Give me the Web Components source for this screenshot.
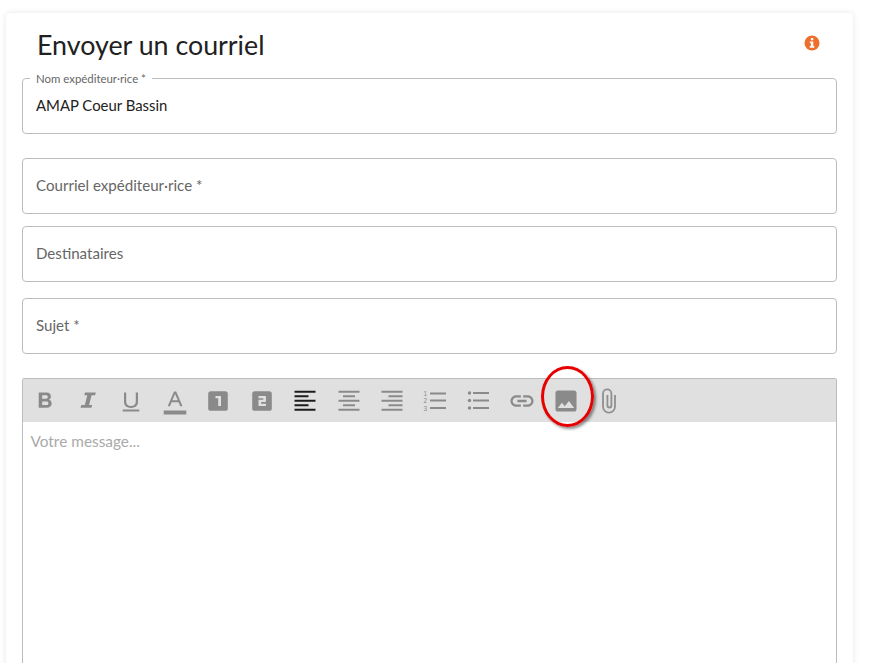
<!DOCTYPE html>
<html lang="fr">
<head>
<meta charset="UTF-8">
<title>Envoyer un courriel</title>
<style>
  html, body { margin: 0; height: 663px; overflow: hidden; background: #fff; }
  body { font-family: "Lato", "Noto Sans", sans-serif; color: #212121; padding: 13px 23px 0 6px; box-sizing: border-box; }
</style>
</head>
<body>
<mail-card>
  <mail-field label="Nom expéditeur·rice *" value="AMAP Coeur Bassin" gap="24"></mail-field>
  <mail-field label="Courriel expéditeur·rice *" gap="12"></mail-field>
  <mail-field label="Destinataires" gap="16"></mail-field>
  <mail-field label="Sujet *" gap="24"></mail-field>
  <mail-editor placeholder="Votre message..."></mail-editor>
</mail-card>

<template id="card-tpl">
  <style>
    :host { display: block; background: #fff; border-radius: 4px; height: 700px; padding: 0 16px; box-shadow: 0 0 6px rgba(0,0,0,.1); }
    header { display: flex; justify-content: space-between; height: 65px; padding: 0 16px; }
    h1 { margin: 14px 0 0 -1px; font-size: 26.8px; line-height: 36px; font-weight: 400; color: #212121; }
    svg { margin: 22px 0 0 0; }
  </style>
  <header>
    <h1>Envoyer un courriel</h1>
    <svg width="16" height="16" viewBox="0 0 16 16" style="margin-right:1px">
      <circle cx="8" cy="8" r="7.5" fill="#ee6e2b"/>
      <rect x="6.9" y="3" width="2.4" height="2.2" rx=".5" fill="#fff"/>
      <path d="M5.8 6.4h3.5v4.7h1v1.6H5.8v-1.6h1V8H5.8z" fill="#fff"/>
    </svg>
  </header>
  <slot></slot>
</template>

<template id="field-tpl">
  <style>
    :host { display: block; position: relative; box-sizing: border-box; height: 56px; border: 1px solid #bdbdbd; border-radius: 4px; }
    .row { display: flex; align-items: center; box-sizing: border-box; height: 100%; padding: 0 13px 2px; font-size: 15.1px; color: #666; }
    .row.value { color: #212121; font-size: 14.9px; }
    label { position: absolute; left: 7px; top: -8px; padding: 0 6px; background: #fff; font-size: 11.4px; line-height: 15px; color: #666; }
  </style>
  <div class="row"></div>
</template>

<template id="editor-tpl">
  <style>
    :host { display: block; position: relative; box-sizing: border-box; height: 400px; border: 1px solid #bdbdbd; border-radius: 2px; }
    nav { display: flex; height: 43px; background: #e0e0e0; padding-left: 0; }
    .msg { padding: 9px 7.5px; font-size: 15.4px; line-height: 20px; color: #aaa; }
    .ring { position: absolute; left: 518px; top: -13px; width: 53px; height: 61px; box-sizing: border-box; border: 3.5px solid #e60000; border-radius: 50%; box-shadow: 2px 2px 3px rgba(0,0,0,.45); }
  </style>
  <nav>
    <tool-btn style="margin-right:-.7px"><svg viewBox="0 0 24 24"><path fill-rule="evenodd" d="M5.700 3.500h7.600c3 0 4.600 1.600 4.600 4 0 1.500-.7 2.500-1.800 3.200 1.700.6 2.600 1.900 2.600 3.600 0 2.800-1.900 4.500-4.900 4.500H5.700zM9.200 6.300v3.400h3.800c1.100 0 1.800-.6 1.800-1.700s-.7-1.700-1.800-1.700zM9.200 12.400v3.700h4.300c1.200 0 1.900-.7 1.900-1.900s-.7-1.800-1.900-1.800z"/></svg></tool-btn>
    <tool-btn><svg viewBox="0 0 24 24"><path d="M9 3.500h10.800l-.7 2.800h-3.500l-2.500 9.700h3.100l-.8 2.800H4.500l.8-2.800h3.500l2.500-9.700H8.300z"/></svg></tool-btn>
    <tool-btn><svg viewBox="0 0 24 24"><path d="M5 3.500h2.200v9c0 3 1.800 4.400 4.800 4.400s4.800-1.400 4.800-4.400v-9H19v9.200c0 4.100-2.900 6.200-7 6.200s-7-2.100-7-6.200zM3.700 20.500h16.600v2H3.700z"/></svg></tool-btn>
    <tool-btn><svg viewBox="0 0 24 24" style="overflow:visible"><path fill-rule="evenodd" d="M11 2.500h2.200l6.300 14.700h-2.300l-1.600-4H8.600l-1.600 4H4.700zM9.400 11.200h5.400L12 4.900zM.7 21.500h22.600v4H.7z"/></svg></tool-btn>
    <tool-btn><svg viewBox="0 0 24 24"><path fill-rule="evenodd" d="M4.800 2.200h14.400a2.600 2.600 0 0 1 2.600 2.600v14.400a2.600 2.600 0 0 1-2.600 2.600H4.800a2.600 2.600 0 0 1-2.600-2.600V4.800a2.600 2.600 0 0 1 2.600-2.600zM9.500 7v2.300h2.700v7.700h2.800V7z"/></svg></tool-btn>
    <tool-btn><svg viewBox="0 0 24 24"><path fill-rule="evenodd" d="M4.800 2.200h14.400a2.600 2.600 0 0 1 2.600 2.600v14.400a2.600 2.600 0 0 1-2.600 2.600H4.800a2.600 2.600 0 0 1-2.600-2.600V4.800a2.600 2.600 0 0 1 2.600-2.600zM8.500 7v2.300h4.800v1.500H8.500V17h7.400v-2.300h-4.800v-1.600h4.800V7z"/></svg></tool-btn>
    <tool-btn><svg viewBox="0 0 24 24" style="fill:#1c1c1c"><path d="M1.500 1.800h21v2h-21zM1.500 6.300h14v2h-14zM1.500 10.800h21v2h-21zM1.500 15.300h14v2h-14zM1.500 19.800h21v2h-21z"/></svg></tool-btn>
    <tool-btn><svg viewBox="0 0 24 24"><path d="M1.500 1.800h21v2h-21zM6 6.300h12v2H6zM1.500 10.800h21v2h-21zM6 15.300h12v2H6zM1.500 19.800h21v2h-21z"/></svg></tool-btn>
    <tool-btn><svg viewBox="0 0 24 24"><path d="M1.500 1.800h21v2h-21zM8.500 6.300h14v2h-14zM1.500 10.800h21v2h-21zM8.500 15.300h14v2h-14zM1.500 19.800h21v2h-21z"/></svg></tool-btn>
    <tool-btn><svg viewBox="0 0 24 24" style="overflow:visible"><path d="M6 3.500h16v2H6zM6 10.500h16v2H6zM6 18h16v2H6z"/><text x="-.5" y="6.500" font-size="6.500" font-family="Liberation Sans">1</text><text x="-.5" y="14" font-size="6.500" font-family="Liberation Sans">2</text><text x="-.5" y="21.500" font-size="6.500" font-family="Liberation Sans">3</text></svg></tool-btn>
    <tool-btn><svg viewBox="0 0 24 24"><circle cx="2.500" cy="4" r="1.700"/><circle cx="2.500" cy="11.500" r="1.700"/><circle cx="2.500" cy="19" r="1.700"/><path d="M6 3h16v2H6zM6 10.500h16v2H6zM6 18h16v2H6z"/></svg></tool-btn>
    <tool-btn><svg viewBox="0 0 24 24" style="overflow:visible"><path transform="translate(11 12) scale(1.150) translate(-12 -12)" d="M3.900 12c0-1.710 1.390-3.100 3.100-3.100h4V7H7c-2.760 0-5 2.240-5 5s2.240 5 5 5h4v-1.900H7c-1.710 0-3.100-1.390-3.100-3.100zM8 13h8v-2H8v2zm9-6h-4v1.900h4c1.710 0 3.100 1.390 3.100 3.100s-1.390 3.100-3.100 3.100h-4V17h4c2.760 0 5-2.240 5-5s-2.240-5-5-5z"/></svg></tool-btn>
    <tool-btn><svg viewBox="0 0 24 24" style="overflow:visible"><path transform="translate(12 12) scale(1.170) translate(-12 -12)" d="M21 19V5c0-1.100-.9-2-2-2H5c-1.100 0-2 .9-2 2v14c0 1.100.9 2 2 2h14c1.100 0 2-.9 2-2zM8.500 13.500l2.500 3.010L14.500 12l4.500 6H5l3.500-4.500z"/></svg></tool-btn>
    <tool-btn><svg viewBox="0 0 24 24" style="overflow:visible;fill:none;stroke:#8f8f8f;stroke-width:1.800"><path transform="translate(-2 0)" d="M19 6v11.500a6 6.200 0 0 1-12 0V4.500a4.200 4.200 0 0 1 8.400 0v12a2 2 0 0 1-4 0V6"/></svg></tool-btn>
  </nav>
  <div class="msg"></div>
  <div class="ring"></div>
</template>

<template id="btn-tpl">
  <style>
    :host { display: flex; flex: 0 0 43.5px; align-items: center; justify-content: center; }
    ::slotted(svg) { width: 24px; height: 24px; fill: #8a8a8a; }
  </style>
  <slot></slot>
</template>

<script>
  function fromTemplate(el, id) {
    let shadow = el.attachShadow({ mode: 'open' })
    shadow.appendChild(document.getElementById(id).content.cloneNode(true))
    return shadow
  }

  class MailCard extends HTMLElement {
    constructor() {
      super()
      fromTemplate(this, 'card-tpl')
    }
  }

  class MailField extends HTMLElement {
    connectedCallback() {
      let shadow = this.shadowRoot || fromTemplate(this, 'field-tpl')
      let row = shadow.querySelector('.row')
      let value = this.getAttribute('value')
      let text = this.getAttribute('label')
      if (value) {
        // le libellé flotte au-dessus de la bordure quand le champ est rempli
        row.textContent = value
        row.classList.add('value')
        let label = document.createElement('label')
        label.textContent = text
        shadow.appendChild(label)
      } else {
        row.textContent = text
      }
      this.style.marginBottom = (this.getAttribute('gap') || 0) + 'px'
    }
  }

  class MailEditor extends HTMLElement {
    connectedCallback() {
      let shadow = this.shadowRoot || fromTemplate(this, 'editor-tpl')
      shadow.querySelector('.msg').textContent = this.getAttribute('placeholder')
    }
  }

  class ToolBtn extends HTMLElement {
    constructor() {
      super()
      fromTemplate(this, 'btn-tpl')
    }
  }

  customElements.define('mail-card', MailCard)
  customElements.define('mail-field', MailField)
  customElements.define('mail-editor', MailEditor)
  customElements.define('tool-btn', ToolBtn)
</script>
</body>
</html>
